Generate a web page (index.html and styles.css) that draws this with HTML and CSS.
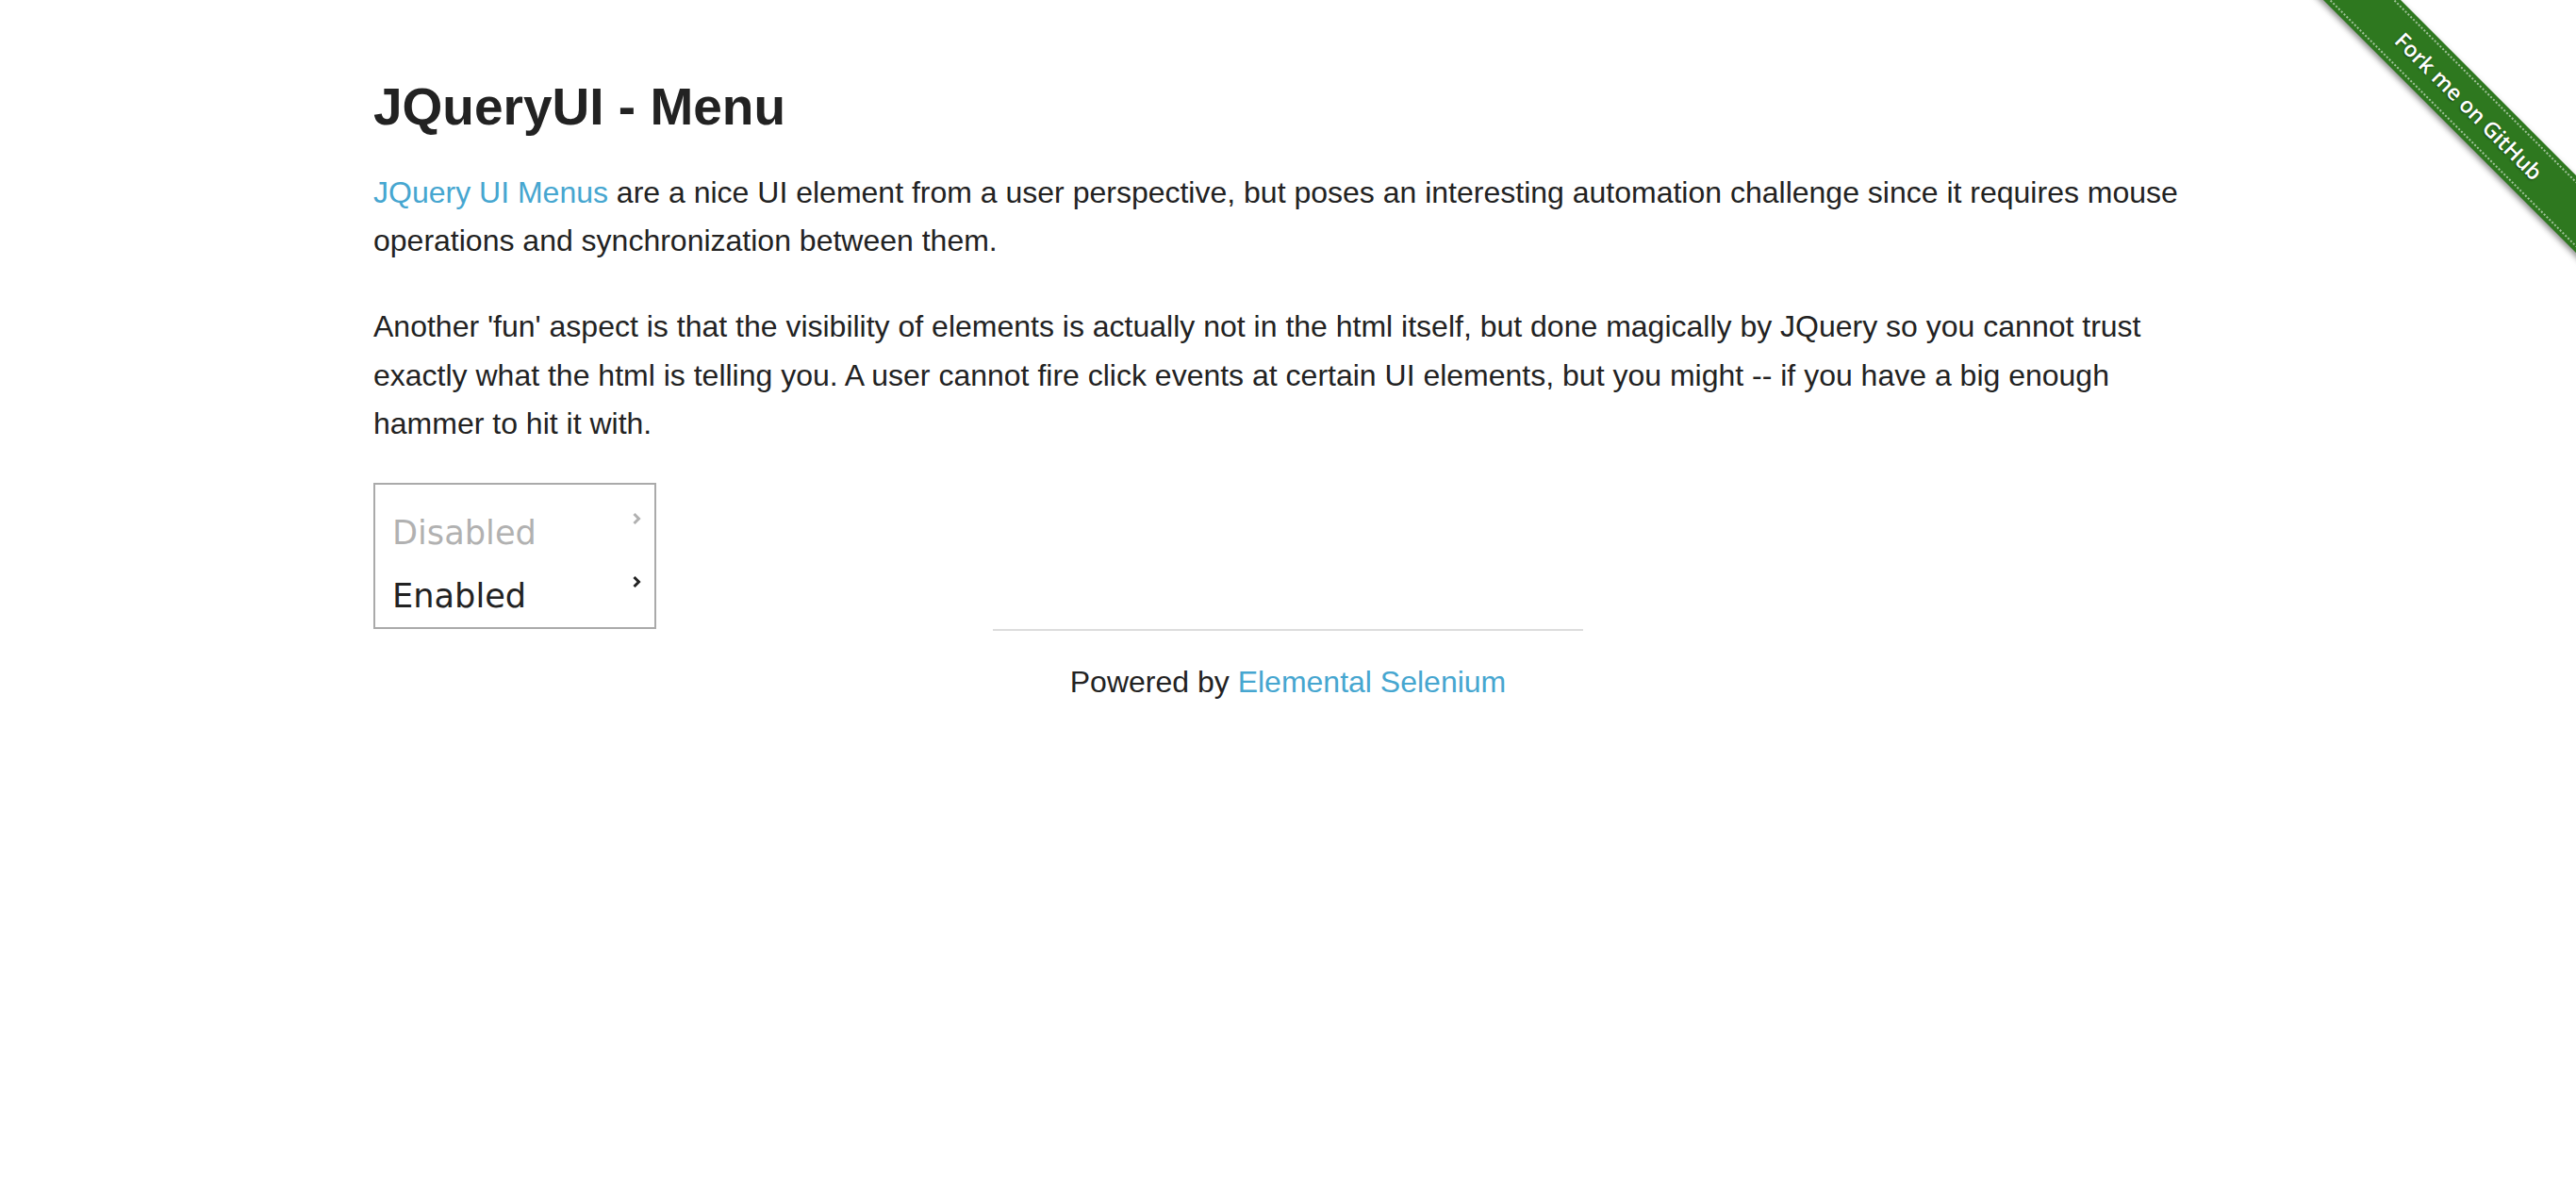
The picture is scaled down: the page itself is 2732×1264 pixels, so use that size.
FILE: index.html
```html
<!DOCTYPE html>
<html lang="en">
<head>
<meta charset="utf-8">
<title>The Internet</title>
<link rel="stylesheet" href="styles.css">
</head>
<body>
<a class="fork" href="#">
  <span class="fork-band"><span class="fork-inner">Fork me on GitHub</span></span>
</a>
<div class="page">
  <div class="example">
    <h3 class="title">JQueryUI - Menu</h3>
    <p><a href="#">JQuery UI Menus</a> are a nice UI element from a user perspective, but poses an interesting automation challenge since it requires mouse operations and synchronization between them.</p>
    <p class="last">Another 'fun' aspect is that the visibility of elements is actually not in the html itself, but done magically by JQuery so you cannot trust exactly what the html is telling you. A user cannot fire click events at certain UI elements, but you might -- if you have a big enough hammer to hit it with.</p>
    <ul class="menu">
      <li class="menu-item disabled">
        <span class="menu-label">Disabled</span>
        <svg class="caret" width="10" height="14" viewBox="0 0 10 14"><path d="M2.5 2 L7.5 7 L2.5 12" fill="none" stroke="currentColor" stroke-width="3"/></svg>
      </li>
      <li class="menu-item">
        <span class="menu-label">Enabled</span>
        <svg class="caret" width="10" height="14" viewBox="0 0 10 14"><path d="M2.5 2 L7.5 7 L2.5 12" fill="none" stroke="currentColor" stroke-width="3"/></svg>
      </li>
    </ul>
  </div>
  <div class="footer">
    <hr class="rule">
    <div class="powered">Powered by <a href="#">Elemental Selenium</a></div>
  </div>
</div>
</body>
</html>
```

FILE: styles.css
```css
html, body {
  margin: 0;
  padding: 0;
  background: #fff;
}

body {
  font-family: "Liberation Sans", Arial, Helvetica, sans-serif;
  color: #222;
  font-size: 32px;
  line-height: 51.2px;
}

a {
  color: #46a6d0;
  text-decoration: none;
}

.page {
  max-width: 2000px;
  margin: 0 auto;
  padding: 0 30px;
  box-sizing: border-box;
}

.title {
  font-size: 55px;
  line-height: 77px;
  font-weight: bold;
  margin: 75px 0 27px;
  color: #222;
}

.example p {
  margin: 0 0 40px;
}

.example p.last {
  margin-bottom: 37px;
}

.menu {
  list-style: none;
  margin: 0;
  padding: 17px 0 0;
  width: 300px;
  box-sizing: border-box;
  border: 2px solid #aaa;
  font-family: "DejaVu Sans", Verdana, sans-serif;
  font-size: 35.2px;
  color: #222;
}

.menu-item {
  display: flex;
  justify-content: space-between;
  align-items: flex-start;
  padding: 6px 14px 6px 18px;
  line-height: 55px;
}

.menu-item.disabled {
  opacity: 0.35;
}

.caret {
  display: block;
  margin-top: 6px;
  color: #222;
}

.footer {
  width: 626px;
  margin: 0 auto;
}

.rule {
  border: 0;
  border-top: 2px solid #ddd;
  height: 0;
  margin: 0;
}

.powered {
  text-align: center;
  margin-top: 29px;
}

.fork {
  position: absolute;
  top: 0;
  right: 0;
  width: 300px;
  height: 300px;
  overflow: hidden;
  text-decoration: none;
}

.fork-band {
  position: absolute;
  left: -24px;
  top: 84px;
  width: 420px;
  height: 58px;
  box-sizing: border-box;
  padding: 4px 0;
  background: #2e781f;
  transform: rotate(45deg);
  box-shadow: 0 3px 6px rgba(0, 0, 0, 0.45);
  display: flex;
}

.fork-inner {
  flex: 1;
  display: flex;
  align-items: center;
  justify-content: center;
  border-top: 2px dotted rgba(255, 255, 255, 0.55);
  border-bottom: 2px dotted rgba(255, 255, 255, 0.55);
  color: #fff;
  font-family: "Open Sans", "DejaVu Sans", sans-serif;
  font-weight: 600;
  font-size: 23px;
  text-shadow: 0 1px 2px rgba(0, 0, 0, 0.5);
}
```
